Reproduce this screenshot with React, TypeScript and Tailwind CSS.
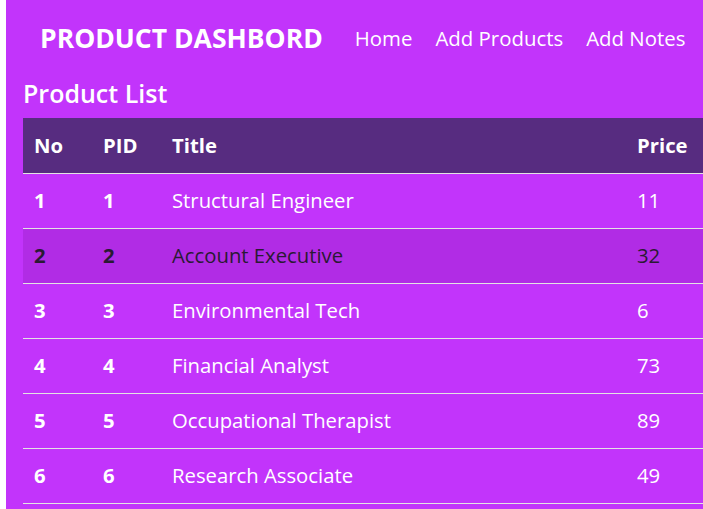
import React from "react";

const rows = [
  { no: 1, pid: 1, title: "Structural Engineer", price: 11 },
  { no: 2, pid: 2, title: "Account Executive", price: 32 },
  { no: 3, pid: 3, title: "Environmental Tech", price: 6 },
  { no: 4, pid: 4, title: "Financial Analyst", price: 73 },
  { no: 5, pid: 5, title: "Occupational Therapist", price: 89 },
  { no: 6, pid: 6, title: "Research Associate", price: 49 },
];

export default function App() {
  return (
    <div
      className="flex h-[509px] w-[703px] overflow-hidden bg-white"
      style={{ fontFamily: '"Open Sans", "Noto Sans", sans-serif' }}
    >
      <div className="w-[6px] shrink-0 bg-white" />
      <div className="flex-1 overflow-hidden bg-[#c234fb] text-white">
        <nav className="flex h-[76px] items-center pl-[34px]">
          <div className="text-[26.5px] font-bold leading-[32px]">PRODUCT DASHBORD</div>
          <div className="ml-[32px] flex gap-[23px] text-[20.4px]">
            <span>Home</span>
            <span>Add Products</span>
            <span>Add Notes</span>
          </div>
        </nav>
        <h2 className="pl-[17px] text-[25px] font-semibold leading-[34px]">Product List</h2>
        <table className="ml-[17px] mt-[8px] w-[700px] table-fixed border-collapse text-[20.3px]">
          <colgroup>
            <col className="w-[69px]" />
            <col className="w-[69px]" />
            <col className="w-[465px]" />
            <col />
          </colgroup>
          <thead>
            <tr className="h-[55px] border-b border-[#e3e3e3] bg-[#572c80] text-left">
              <th className="pl-[11px] font-bold">No</th>
              <th className="pl-[11px] font-bold">PID</th>
              <th className="pl-[11px] font-bold">Title</th>
              <th className="pl-[11px] font-bold">Price</th>
            </tr>
          </thead>
          <tbody>
            {rows.map((r) => (
              <tr
                key={r.no}
                className={
                  "h-[55px] border-b border-[#e3e3e3] " +
                  (r.no === 2 ? "bg-[#b12ce5] text-[#2a1a33]" : "")
                }
              >
                <td className="pl-[11px] font-bold">{r.no}</td>
                <td className="pl-[11px] font-bold">{r.pid}</td>
                <td className="pl-[11px]">{r.title}</td>
                <td className="pl-[11px]">{r.price}</td>
              </tr>
            ))}
          </tbody>
        </table>
      </div>
    </div>
  );
}
